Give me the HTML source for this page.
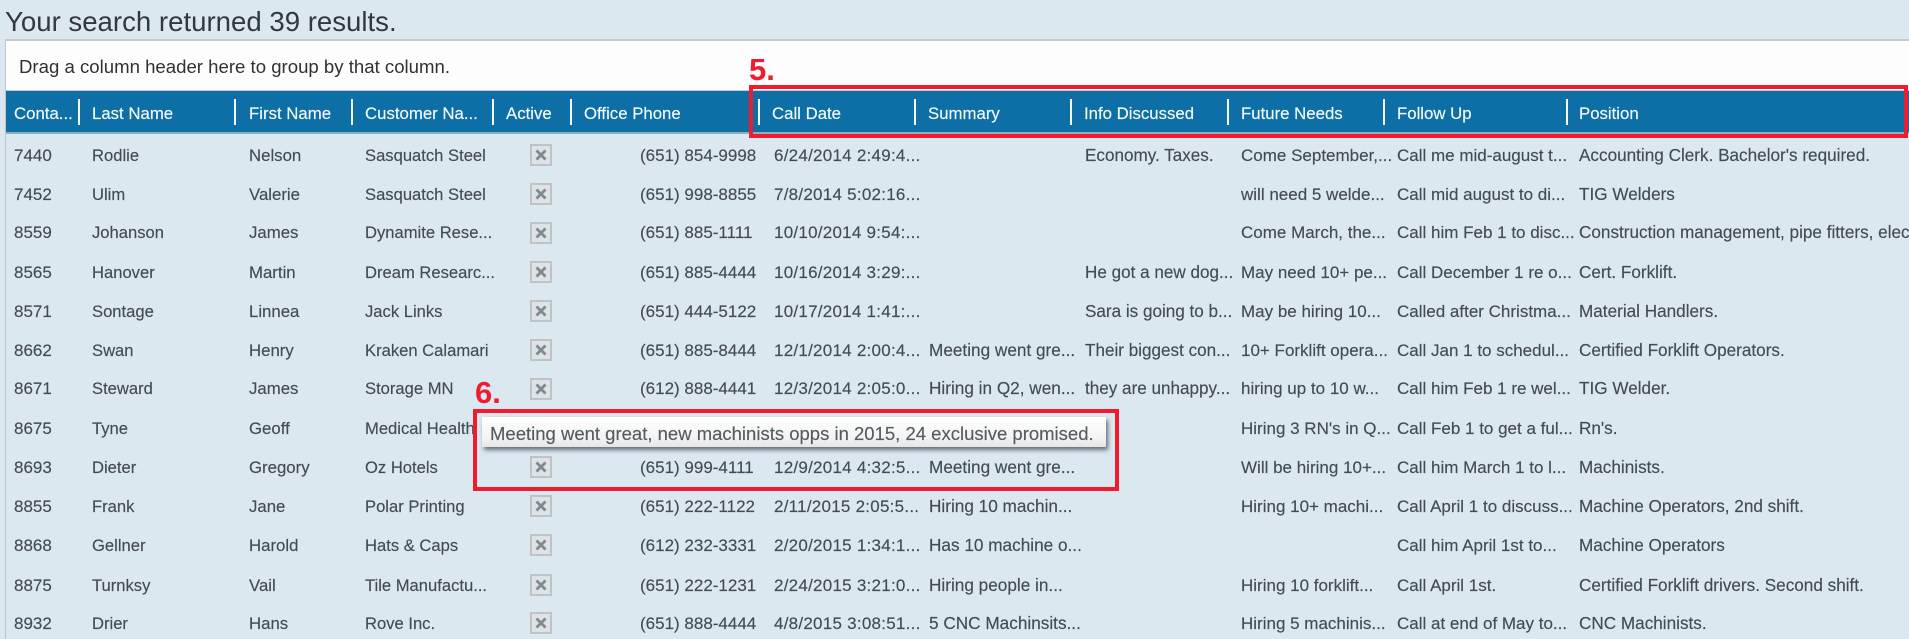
<!DOCTYPE html>
<html>
<head>
<meta charset="utf-8">
<style>
html,body{margin:0;padding:0;width:1909px;height:639px;overflow:hidden;background:#dbe8f0;font-family:"Liberation Sans",sans-serif;}
#p{position:absolute;left:0;top:0;width:1909px;height:639px;overflow:hidden;background:#dbe8f0;}
.a{position:absolute;}
h1{position:absolute;left:5px;top:6px;margin:0;font-weight:normal;font-size:27.6px;line-height:32px;color:#33383d;white-space:nowrap;}
#bar{position:absolute;left:5px;top:39px;width:1904px;height:51px;background:#fdfdfd;border-top:2px solid #c2c9d0;border-left:1px solid #c2c9d0;box-sizing:border-box;}
#lb{position:absolute;left:5px;top:39px;width:1px;height:600px;background:#bcc5cc;}
#drag{position:absolute;left:19px;top:57px;font-size:18.6px;line-height:20px;color:#2e3235;white-space:nowrap;}
#hl{position:absolute;left:6px;top:90px;width:1903px;height:1px;background:#c8ccd0;}
#hd{position:absolute;left:6px;top:91px;width:1903px;height:41px;background:#0d6fa5;}
#hb{position:absolute;left:6px;top:132px;width:1903px;height:2px;background:#8db0c4;}
.s{position:absolute;top:99px;width:2px;height:26px;background:#f2f7fa;}
.h{position:absolute;top:104px;font-size:16.8px;line-height:20px;color:#f4f9fc;white-space:nowrap;-webkit-text-stroke:.15px #f4f9fc;}
.r{position:absolute;left:0;width:1909px;height:20px;margin-top:1px;font-size:17px;line-height:20px;color:#454b50;white-space:nowrap;-webkit-text-stroke:.15px #454b50;}
.r span{position:absolute;top:0;}
.r .c8,.r .c12{top:-1px;}
.c1{left:14px}.c2{left:92px;font-size:16.6px}.c3{left:249px;font-size:16.8px}.c4{left:365px;font-size:16.6px}.c6{left:640px}.c7{left:774px;letter-spacing:.25px}.c8{left:929px;font-size:17.2px}.c9{left:1085px;font-size:17.1px}.c10{left:1241px}.c11{left:1397px}.c12{left:1579px;font-size:17.15px}
.cb{position:absolute;left:530px;width:22px;height:22px;box-sizing:border-box;border:2px solid #bcc4c9;background:#dfe3e6;}
.cb svg{position:absolute;left:3px;top:3px;width:12px;height:12px;}
.red{position:absolute;border:4px solid #ee1c2e;box-sizing:border-box;}
.num{position:absolute;font-weight:bold;font-size:31px;line-height:34px;color:#ee1c2e;white-space:nowrap;}
#tip{position:absolute;left:482px;top:417px;width:624px;height:30px;background:linear-gradient(#ffffff,#f3f3f3 70%,#e6e6e6);box-shadow:2px 3px 4px rgba(60,70,80,.75);border-radius:1px;}
#tip div{position:absolute;left:8px;top:7px;font-size:18.5px;line-height:20px;color:#565b5f;white-space:nowrap;-webkit-text-stroke:.15px #565b5f;}
</style>
</head>
<body>
<div id="p">
<h1>Your search returned 39 results.</h1>
<div id="bar"></div>
<div id="lb"></div>
<div id="drag">Drag a column header here to group by that column.</div>
<div id="hl"></div>
<div id="hd"></div>
<div id="hb"></div>

<div class="s" style="left:78px"></div>
<div class="s" style="left:234px"></div>
<div class="s" style="left:351px"></div>
<div class="s" style="left:492px"></div>
<div class="s" style="left:570px"></div>
<div class="s" style="left:758px"></div>
<div class="s" style="left:914px"></div>
<div class="s" style="left:1070px"></div>
<div class="s" style="left:1227px"></div>
<div class="s" style="left:1383px"></div>
<div class="s" style="left:1566px"></div>

<div class="h" style="left:14px">Conta...</div>
<div class="h" style="left:92px">Last Name</div>
<div class="h" style="left:249px">First Name</div>
<div class="h" style="left:365px">Customer Na...</div>
<div class="h" style="left:506px">Active</div>
<div class="h" style="left:584px">Office Phone</div>
<div class="h" style="left:772px">Call Date</div>
<div class="h" style="left:928px">Summary</div>
<div class="h" style="left:1084px">Info Discussed</div>
<div class="h" style="left:1241px">Future Needs</div>
<div class="h" style="left:1397px">Follow Up</div>
<div class="h" style="left:1579px">Position</div>

<div class="r" style="top:145px"><span class="c1">7440</span><span class="c2">Rodlie</span><span class="c3">Nelson</span><span class="c4">Sasquatch Steel</span><span class="c6">(651) 854-9998</span><span class="c7">6/24/2014 2:49:4...</span><span class="c9">Economy. Taxes.</span><span class="c10">Come September,...</span><span class="c11">Call me mid-august t...</span><span class="c12">Accounting Clerk. Bachelor's required.</span></div>
<div class="r" style="top:184px"><span class="c1">7452</span><span class="c2">Ulim</span><span class="c3">Valerie</span><span class="c4">Sasquatch Steel</span><span class="c6">(651) 998-8855</span><span class="c7">7/8/2014 5:02:16...</span><span class="c10">will need 5 welde...</span><span class="c11">Call mid august to di...</span><span class="c12">TIG Welders</span></div>
<div class="r" style="top:222px"><span class="c1">8559</span><span class="c2">Johanson</span><span class="c3">James</span><span class="c4">Dynamite Rese...</span><span class="c6">(651) 885-1111</span><span class="c7">10/10/2014 9:54:...</span><span class="c10">Come March, the...</span><span class="c11">Call him Feb 1 to disc...</span><span class="c12">Construction management, pipe fitters, electricians</span></div>
<div class="r" style="top:262px"><span class="c1">8565</span><span class="c2">Hanover</span><span class="c3">Martin</span><span class="c4">Dream Researc...</span><span class="c6">(651) 885-4444</span><span class="c7">10/16/2014 3:29:...</span><span class="c9">He got a new dog...</span><span class="c10">May need 10+ pe...</span><span class="c11">Call December 1 re o...</span><span class="c12">Cert. Forklift.</span></div>
<div class="r" style="top:301px"><span class="c1">8571</span><span class="c2">Sontage</span><span class="c3">Linnea</span><span class="c4">Jack Links</span><span class="c6">(651) 444-5122</span><span class="c7">10/17/2014 1:41:...</span><span class="c9">Sara is going to b...</span><span class="c10">May be hiring 10...</span><span class="c11">Called after Christma...</span><span class="c12">Material Handlers.</span></div>
<div class="r" style="top:340px"><span class="c1">8662</span><span class="c2">Swan</span><span class="c3">Henry</span><span class="c4">Kraken Calamari</span><span class="c6">(651) 885-8444</span><span class="c7">12/1/2014 2:00:4...</span><span class="c8">Meeting went gre...</span><span class="c9">Their biggest con...</span><span class="c10">10+ Forklift opera...</span><span class="c11">Call Jan 1 to schedul...</span><span class="c12">Certified Forklift Operators.</span></div>
<div class="r" style="top:378px"><span class="c1">8671</span><span class="c2">Steward</span><span class="c3">James</span><span class="c4">Storage MN</span><span class="c6">(612) 888-4441</span><span class="c7">12/3/2014 2:05:0...</span><span class="c8">Hiring in Q2, wen...</span><span class="c9">they are unhappy...</span><span class="c10">hiring up to 10 w...</span><span class="c11">Call him Feb 1 re wel...</span><span class="c12">TIG Welder.</span></div>
<div class="r" style="top:418px"><span class="c1">8675</span><span class="c2">Tyne</span><span class="c3">Geoff</span><span class="c4">Medical Health</span><span class="c10">Hiring 3 RN's in Q...</span><span class="c11">Call Feb 1 to get a ful...</span><span class="c12">Rn's.</span></div>
<div class="r" style="top:457px"><span class="c1">8693</span><span class="c2">Dieter</span><span class="c3">Gregory</span><span class="c4">Oz Hotels</span><span class="c6">(651) 999-4111</span><span class="c7">12/9/2014 4:32:5...</span><span class="c8">Meeting went gre...</span><span class="c10">Will be hiring 10+...</span><span class="c11">Call him March 1 to l...</span><span class="c12">Machinists.</span></div>
<div class="r" style="top:496px"><span class="c1">8855</span><span class="c2">Frank</span><span class="c3">Jane</span><span class="c4">Polar Printing</span><span class="c6">(651) 222-1122</span><span class="c7">2/11/2015 2:05:5...</span><span class="c8">Hiring 10 machin...</span><span class="c10">Hiring 10+ machi...</span><span class="c11">Call April 1 to discuss...</span><span class="c12">Machine Operators, 2nd shift.</span></div>
<div class="r" style="top:535px"><span class="c1">8868</span><span class="c2">Gellner</span><span class="c3">Harold</span><span class="c4">Hats &amp; Caps</span><span class="c6">(612) 232-3331</span><span class="c7">2/20/2015 1:34:1...</span><span class="c8">Has 10 machine o...</span><span class="c11">Call him April 1st to...</span><span class="c12">Machine Operators</span></div>
<div class="r" style="top:575px"><span class="c1">8875</span><span class="c2">Turnksy</span><span class="c3">Vail</span><span class="c4">Tile Manufactu...</span><span class="c6">(651) 222-1231</span><span class="c7">2/24/2015 3:21:0...</span><span class="c8">Hiring people in...</span><span class="c10">Hiring 10 forklift...</span><span class="c11">Call April 1st.</span><span class="c12">Certified Forklift drivers. Second shift.</span></div>
<div class="r" style="top:613px"><span class="c1">8932</span><span class="c2">Drier</span><span class="c3">Hans</span><span class="c4">Rove Inc.</span><span class="c6">(651) 888-4444</span><span class="c7">4/8/2015 3:08:51...</span><span class="c8">5 CNC Machinsits...</span><span class="c10">Hiring 5 machinis...</span><span class="c11">Call at end of May to...</span><span class="c12">CNC Machinists.</span></div>

<div class="cb" style="top:144px"><svg viewBox="0 0 12 12"><path d="M1.5 1.5L10.5 10.5M10.5 1.5L1.5 10.5" stroke="#7f898f" stroke-width="2.8" fill="none"/></svg></div>
<div class="cb" style="top:183px"><svg viewBox="0 0 12 12"><path d="M1.5 1.5L10.5 10.5M10.5 1.5L1.5 10.5" stroke="#7f898f" stroke-width="2.8" fill="none"/></svg></div>
<div class="cb" style="top:222px"><svg viewBox="0 0 12 12"><path d="M1.5 1.5L10.5 10.5M10.5 1.5L1.5 10.5" stroke="#7f898f" stroke-width="2.8" fill="none"/></svg></div>
<div class="cb" style="top:261px"><svg viewBox="0 0 12 12"><path d="M1.5 1.5L10.5 10.5M10.5 1.5L1.5 10.5" stroke="#7f898f" stroke-width="2.8" fill="none"/></svg></div>
<div class="cb" style="top:300px"><svg viewBox="0 0 12 12"><path d="M1.5 1.5L10.5 10.5M10.5 1.5L1.5 10.5" stroke="#7f898f" stroke-width="2.8" fill="none"/></svg></div>
<div class="cb" style="top:339px"><svg viewBox="0 0 12 12"><path d="M1.5 1.5L10.5 10.5M10.5 1.5L1.5 10.5" stroke="#7f898f" stroke-width="2.8" fill="none"/></svg></div>
<div class="cb" style="top:378px"><svg viewBox="0 0 12 12"><path d="M1.5 1.5L10.5 10.5M10.5 1.5L1.5 10.5" stroke="#7f898f" stroke-width="2.8" fill="none"/></svg></div>
<div class="cb" style="top:417px"></div>
<div class="cb" style="top:456px"><svg viewBox="0 0 12 12"><path d="M1.5 1.5L10.5 10.5M10.5 1.5L1.5 10.5" stroke="#7f898f" stroke-width="2.8" fill="none"/></svg></div>
<div class="cb" style="top:495px"><svg viewBox="0 0 12 12"><path d="M1.5 1.5L10.5 10.5M10.5 1.5L1.5 10.5" stroke="#7f898f" stroke-width="2.8" fill="none"/></svg></div>
<div class="cb" style="top:534px"><svg viewBox="0 0 12 12"><path d="M1.5 1.5L10.5 10.5M10.5 1.5L1.5 10.5" stroke="#7f898f" stroke-width="2.8" fill="none"/></svg></div>
<div class="cb" style="top:574px"><svg viewBox="0 0 12 12"><path d="M1.5 1.5L10.5 10.5M10.5 1.5L1.5 10.5" stroke="#7f898f" stroke-width="2.8" fill="none"/></svg></div>
<div class="cb" style="top:612px"><svg viewBox="0 0 12 12"><path d="M1.5 1.5L10.5 10.5M10.5 1.5L1.5 10.5" stroke="#7f898f" stroke-width="2.8" fill="none"/></svg></div>

<div id="tip"><div>Meeting went great, new machinists opps in 2015, 24 exclusive promised.</div></div>

<div class="red" style="left:749px;top:85px;width:1159px;height:53px"></div>
<div class="red" style="left:473px;top:409px;width:646px;height:82px"></div>
<div class="num" style="left:749px;top:53px">5.</div>
<div class="num" style="left:475px;top:376px">6.</div>
</div>
</body>
</html>
